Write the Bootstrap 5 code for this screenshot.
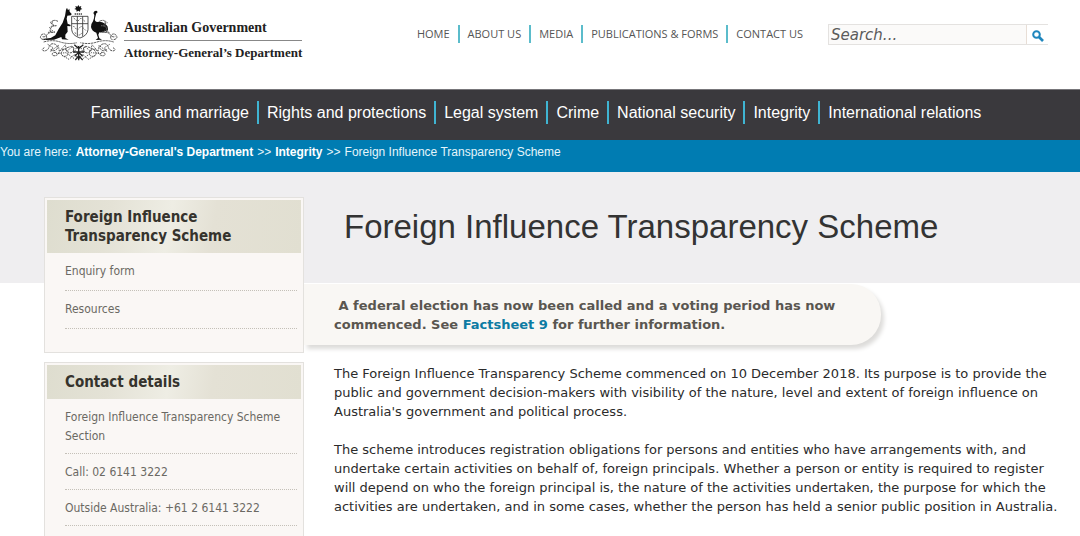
<!DOCTYPE html>
<html lang="en">
<head>
<meta charset="utf-8">
<meta name="viewport" content="width=device-width, initial-scale=1">
<title>Foreign Influence Transparency Scheme</title>
<link href="https://cdn.jsdelivr.net/npm/bootstrap@5.3.0/dist/css/bootstrap.min.css" rel="stylesheet">
<style>
  body { font-family: "DejaVu Sans", Verdana, sans-serif; font-size: 13px; line-height: 19px; color: #2b2b2b; background: #fff; }
  a { text-decoration: none; }
  .masthead { min-height: 89px; padding: 0 32px 0 36px; }
  .brand { color: #222; padding-top: 2px; gap: 2px; }
  .brand-name { font: bold 14px/24px "Liberation Serif", "Times New Roman", serif; margin-top: 14px; }
  .brand-name span + span { border-top: 1px solid #888; font-size: 13px; }
  .top-links { font: 11px/18px "Open Sans", sans-serif; margin-top: 25px; }
  .top-links a { color: #555; }
  .top-links li + li { border-left: 2px solid #5bbccb; margin-left: 8px; padding-left: 8px; }
  .site-search { margin: 24px 0 0 25px; width: 220px; height: 21px; background: #fbfaf9; border: 1px solid #e4e2e0; border-right: 0; }
  .site-search input { font: italic 15px/19px "DejaVu Sans", sans-serif; color: #555; border: 0; background: transparent; padding: 2px 2px 0; min-width: 0; }
  .site-search input::placeholder { color: #5c5c5c; opacity: 1; }
  .site-search button { width: 22px; border: 0; border-left: 1px solid #e8ded6; background: #fff; padding: 2px 0 0; }
  .main-nav { background: #3a393d; border-top: 1px solid #77767a; min-height: 51px; padding: 11px 8px 0 0; font: 16px/23px "Liberation Sans", Arial, sans-serif; }
  .main-nav a { color: #fff; }
  .main-nav li + li { border-left: 2px solid #3fb4d2; margin-left: 8px; padding-left: 8px; }
  .crumbs { background: #007cb2; min-height: 32px; font: 12px/24px "Liberation Sans", Arial, sans-serif; color: #e4f5fb; }
  .crumbs a { color: #fff; font-weight: bold; }
  .page-body { background: linear-gradient(#efeef0 111px, #fff 111px); min-height: calc(100vh - 172px); padding-left: 44px; }
  .side { flex: 0 0 260px; padding-top: 25px; gap: 9px; }
  .panel { background: #faf7f5; border: 1px solid #e3e1de; padding: 2px; font: 12px/19px "DejaVu Sans Condensed", Tahoma, sans-serif; color: #6b6963; }
  .panel h2 { font: bold 15px/19px "DejaVu Sans Condensed", Tahoma, sans-serif; color: #35332d; margin: 0; padding: 8px 18px 7px; background: linear-gradient(100deg, #deddcf, #e4e2d6 25%, #eeede4 48%, #e4e1d5 65%, #e1dfd1); }
  .panel a { color: inherit; }
  .panel li { margin: 0 4px 0 18px; border-bottom: 1px dotted #c4c0b8; }
  .links-panel { min-height: 156px; }
  .links-panel li { padding: 9px 0; }
  .contact-panel { border-bottom: 0; }
  .contact-panel li { padding: 9px 0 7px; }
  .page-title { height: 111px; padding: 35px 0 0 40px; font: 33px/40px "Liberation Sans", Arial, sans-serif; color: #333; margin: 0; }
  .notice { max-width: 577px; margin-top: 1px; background: #f9f7f4; border-radius: 0 30px 30px 0; box-shadow: 3px 4px 4px #dddcda; padding: 12px 40px 11px 30px; font-weight: bold; color: #5a5650; }
  .notice a { color: #0c7ba3; }
  .copy { padding: 19px 16px 0 30px; }
  .copy p { margin-bottom: 19px; }
</style>
</head>
<body>
<header class="masthead d-flex align-items-start">
  <a class="brand d-flex me-auto" href="#">
    <svg width="86" height="65" viewBox="0 0 258 195" aria-hidden="true">
      <path fill="#111" d="M127 9l3 5 6-2-2 6 5 3-6 2-1 6-5-3-5 3-1-6-6-2 5-3-2-6 6 2z"/>
      <path stroke="#444" stroke-width="4" stroke-dasharray="4 2" d="M116 36h23"/>
      <path fill="#111" d="M90 23l3-6 3 8 4-5 1 9 6 7-2 4-11 1-2 9 3 15 9 4-1 4-9-1 1 17-7 9 0 10 10 5-20-1-2-7-10 4-12 4-28 1-8-3 26-3 14-8 10-19 12-19 7-20z"/>
      <path fill="#111" d="M172 33q3-8 11-6l2 4-4 3q-2 7-4 15-2 10 6 11 13-3 24 5 10 6 9 19l-9 4q-9 5-17 3l-3 7 3 11 8 4-19 1 7-6-3-9-2-7q-14-5-16-17-1-8 6-17 4-8 4-19z"/>
      <path fill="none" stroke="#333" stroke-width="2.5" d="M107 43h49v40q-2 18-24 25-23-7-25-25zM107 65h49M124 43v60M140 43v60"/>
      <path fill="none" stroke="#666" stroke-width="3" stroke-dasharray="5 3" d="M113 48l12 10 10-10 14 12M112 72l12 12 12-12 14 14M116 92l13 8 14-10"/>
      <g id="foliage" fill="none" stroke="#555" stroke-width="3">
        <path stroke-dasharray="7 2" d="M66 58q-16-8-18 5-1 10 13 8-15 0-18 11-4 13 14 8-19 0-24 8-7 10-15 5M23 113q-14-3-8-13 9-9 16 1 4 12-7 12M23 120q25-8 50 0t50 2M25 137q-12 7 0 10 12-2 14-12 5-14 19-8 12 7 3 16-12 8-17-3M61 151q-15 0-12 8 8 6 18-3 5-16 19-14 16 5 8 18-12 8-19-5 4-15 25-20 11-6 14 6-3 14-15 11"/>
        <path stroke-dasharray="4 3" d="M50 56l-8 6 11 7-13 8 10 9-15 6M35 127l16 10-8 12 24-19 3 18 18-20 4 20 18-15 5 18 10-22M78 160l21 12 18-16 10 15M60 155l30-3 25 18"/>
      </g>
      <use href="#foliage" transform="matrix(-1 0 0 1 256 0)"/>
      <path fill="none" stroke="#222" stroke-width="4" d="M115 128l13 12 14-12M111 150h34M116 163l12-12 12 12M118 174l10-13 12 13M128 132v43"/>
    </svg>
    <div class="brand-name d-flex flex-column"><span>Australian Government</span><span>Attorney-General’s Department</span></div>
  </a>
  <nav aria-label="Site">
    <ul class="top-links list-unstyled d-flex mb-0">
      <li><a href="#">HOME</a></li><li><a href="#">ABOUT US</a></li><li><a href="#">MEDIA</a></li><li><a href="#">PUBLICATIONS &amp; FORMS</a></li><li><a href="#">CONTACT US</a></li>
    </ul>
  </nav>
  <form class="site-search d-flex" role="search">
    <input class="flex-grow-1" type="search" placeholder="Search..." aria-label="Search">
    <button type="button" class="d-flex align-items-center justify-content-center" aria-label="Search">
      <svg width="12" height="12" viewBox="0 0 12 12" fill="none" stroke="#1f86bd" stroke-width="2"><circle cx="4.5" cy="4.5" r="3.3"/><path stroke-width="2.6" d="M7 7l4 4"/></svg>
    </button>
  </form>
</header>
<nav class="main-nav" aria-label="Main">
  <ul class="list-unstyled d-flex justify-content-center mb-0">
    <li><a href="#">Families and marriage</a></li><li><a href="#">Rights and protections</a></li><li><a href="#">Legal system</a></li><li><a href="#">Crime</a></li><li><a href="#">National security</a></li><li><a href="#">Integrity</a></li><li><a href="#">International relations</a></li>
  </ul>
</nav>
<nav class="crumbs d-flex" aria-label="Breadcrumb">
  <span class="me-1">You are here:</span><a href="#">Attorney-General's Department</a><span class="mx-1">&gt;&gt;</span><a href="#">Integrity</a><span class="mx-1">&gt;&gt;</span><span>Foreign Influence Transparency Scheme</span>
</nav>
<div class="page-body d-flex">
  <aside class="side d-flex flex-column">
    <section class="panel links-panel">
      <h2>Foreign Influence Transparency Scheme</h2>
      <ul class="list-unstyled mb-0"><li><a href="#">Enquiry form</a></li><li><a href="#">Resources</a></li></ul>
    </section>
    <section class="panel contact-panel flex-grow-1">
      <h2>Contact details</h2>
      <ul class="list-unstyled mb-0"><li>Foreign Influence Transparency Scheme Section</li><li>Call: 02 6141 3222</li><li>Outside Australia: +61 2 6141 3222</li></ul>
    </section>
  </aside>
  <main class="flex-grow-1">
    <h1 class="page-title">Foreign Influence Transparency Scheme</h1>
    <div class="notice">&nbsp;A federal election has now been called and a voting period has now commenced. See <a href="#">Factsheet 9</a> for further information.</div>
    <div class="copy">
      <p>The Foreign Influence Transparency Scheme commenced on 10 December 2018. Its purpose is to provide the public and government decision-makers with visibility of the nature, level and extent of foreign influence on Australia's government and political process.</p>
      <p class="mb-0">The scheme introduces registration obligations for persons and entities who have arrangements with, and undertake certain activities on behalf of, foreign principals. Whether a person or entity is required to register will depend on who the foreign principal is, the nature of the activities undertaken, the purpose for which the activities are undertaken, and in some cases, whether the person has held a senior public position in Australia.</p>
    </div>
  </main>
</div>
<script src="https://cdn.jsdelivr.net/npm/bootstrap@5.3.0/dist/js/bootstrap.bundle.min.js"></script>
</body>
</html>
